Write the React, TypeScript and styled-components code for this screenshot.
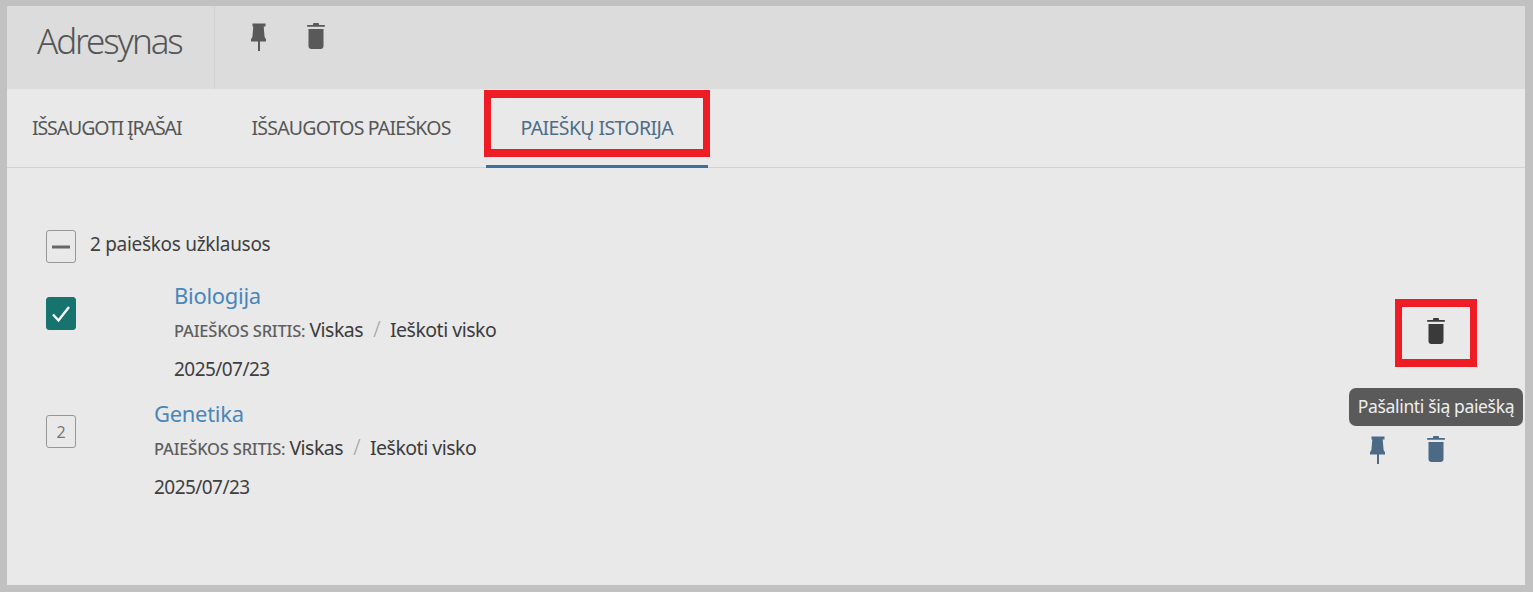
import React from "react";
import styled, { createGlobalStyle } from "styled-components";

const Global = createGlobalStyle`
  html, body { margin: 0; padding: 0; background: #c1c1c1; }
  body { font-family: "Noto Sans", "Liberation Sans", sans-serif; color: #3c3c3c; }
  * { box-sizing: border-box; }
`;

const Frame = styled.div`
  width: 1533px;
  height: 592px;
  padding: 6px 8px 7px 7px;
  background: #c1c1c1;
  overflow: hidden;
`;
const Panel = styled.div`
  height: 579px;
  background: #e9e9e9;
  display: flex;
  flex-direction: column;
`;
const Header = styled.header`
  height: 83px;
  flex: none;
  background: #dcdcdc;
  display: flex;
`;
const TitleBlock = styled.div`
  width: 208px;
  padding: 14px 0 0 30px;
  border-right: 1px solid #d1d1d1;
`;
const Title = styled.h1`
  margin: 0;
  font-size: 35px;
  line-height: 42px;
  font-weight: 300;
  letter-spacing: -2.1px;
  color: #555;
`;
const HeaderTools = styled.div`
  display: flex;
  gap: 40px;
  padding: 17px 0 0 36px;
  color: #595959;
`;
const IconButton = styled.span<{ $tone?: string }>`
  position: relative;
  display: block;
  height: 28px;
  line-height: 0;
  color: ${(p) => p.$tone || "inherit"};
`;
const TabRow = styled.nav`
  height: 79px;
  flex: none;
  display: flex;
  border-bottom: 1px solid #d2d2d2;
`;
const Tab = styled.div<{ $active?: boolean; $track: number }>`
  position: relative;
  padding: 0 35px;
  height: 79px;
  line-height: 77px;
  font-size: 19.5px;
  letter-spacing: ${(p) => p.$track}px;
  white-space: nowrap;
  color: ${(p) => (p.$active ? "#4f6c87" : "#565656")};
  border-bottom: 3px solid ${(p) => (p.$active ? "#3b709f" : "transparent")};
  &:first-child {
    padding-left: 25px;
  }
`;
const RedBox = styled.span<{ $inset: string }>`
  position: absolute;
  inset: ${(p) => p.$inset};
  border: solid #ee1c25;
  border-width: 8px 7px;
  pointer-events: none;
`;
const Content = styled.main`
  padding: 62px 80px 0 39px;
  display: flex;
  flex-direction: column;
`;
const SelectAll = styled.div`
  display: flex;
  align-items: center;
  gap: 14px;
  height: 33px;
  margin-bottom: 17px;
  font-size: 19px;
  line-height: 29px;
  letter-spacing: -0.3px;
  color: #3f3f3f;
`;
const SelectLabel = styled.span`
  padding-bottom: 4px;
`;
const Box = styled.span<{ $checked?: boolean }>`
  flex: none;
  width: 30px;
  height: 33px;
  display: flex;
  align-items: center;
  justify-content: center;
  border-radius: 3px;
  border: 1.5px solid ${(p) => (p.$checked ? "#17736e" : "#969696")};
  background: ${(p) => (p.$checked ? "#17736e" : "transparent")};
  color: #777;
  font-size: 16px;
`;
const Row = styled.section`
  height: 118px;
  display: flex;
`;
const RowBox = styled.div`
  padding-top: 17px;
`;
const RowBody = styled.div<{ $indent: number }>`
  flex: 1;
  padding-left: ${(p) => p.$indent}px;
`;
const ResultTitle = styled.a`
  display: block;
  font-size: 22px;
  line-height: 30px;
  letter-spacing: -0.3px;
  color: #4a86ba;
`;
const Meta = styled.div`
  margin-top: 3px;
  line-height: 32px;
  font-size: 19.5px;
  letter-spacing: -0.5px;
  color: #3c3c3c;
  display: flex;
  align-items: baseline;
`;
const MetaLabel = styled.span`
  font-size: 16.5px;
  letter-spacing: -0.2px;
  font-weight: 500;
  color: #5f5f5f;
  margin-right: 4px;
`;
const Slash = styled.span`
  color: #a3a3a3;
  font-weight: 300;
  margin: 0 10px;
  font-size: 21px;
`;
const DateLine = styled.div`
  margin-top: 6px;
  line-height: 32px;
  font-size: 19px;
  letter-spacing: -0.55px;
  color: #3f3f3f;
`;
const Actions = styled.div`
  display: flex;
  align-items: flex-start;
  gap: 41px;
  padding-top: 38px;
`;
const Tooltip = styled.span`
  position: absolute;
  top: 70px;
  right: -78px;
  width: 174px;
  height: 38px;
  border-radius: 7px;
  background: #5a5a5a;
  color: #eeeeee;
  font-size: 17.5px;
  line-height: 37px;
  letter-spacing: -0.35px;
  text-align: center;
  white-space: nowrap;
`;

const PinIcon = ({ hidden }: { hidden?: boolean }) => (
  <svg width="16" height="28" viewBox="0 0 16 28" fill="currentColor" style={hidden ? { visibility: "hidden" } : undefined}>
    <path d="M1.5 0.5h13v3h-1.8l0.9 10.5 1.4 2.2v2.3H0v-2.3l1.4-2.2 0.9-10.5H1.5z" />
    <rect x="7" y="18" width="2" height="10" />
  </svg>
);

const TrashIcon = () => (
  <svg width="18" height="26" viewBox="0 0 18 26" fill="currentColor">
    <path d="M6 1.2C6 .5 6.5 0 7.2 0h3.6c.7 0 1.2.5 1.2 1.2V2h5.2c.5 0 .8.4.8.9s-.3.9-.8.9H.8C.3 3.800 0 3.400 0 2.900S.3 2 .8 2H6z" />
    <path d="M1.500 6h15v17.200c0 1.600-1.200 2.800-2.800 2.800H4.300c-1.600 0-2.800-1.200-2.800-2.800z" />
  </svg>
);

const rows = [
  { id: 1, title: "Biologija", indent: 98 },
  { id: 2, title: "Genetika", indent: 78 },
];

export default function App() {
  return (
    <Frame>
      <Global />
      <Panel>
        <Header>
          <TitleBlock>
            <Title>Adresynas</Title>
          </TitleBlock>
          <HeaderTools>
            <IconButton>
              <PinIcon />
            </IconButton>
            <IconButton>
              <TrashIcon />
            </IconButton>
          </HeaderTools>
        </Header>
        <TabRow>
          <Tab $track={-1.1}>IŠSAUGOTI ĮRAŠAI</Tab>
          <Tab $track={-0.79}>IŠSAUGOTOS PAIEŠKOS</Tab>
          <Tab $active $track={-0.62}>
            PAIEŠKŲ ISTORIJA
            <RedBox $inset="1px -2px 8px -2px" />
          </Tab>
        </TabRow>
        <Content>
          <SelectAll>
            <Box>
              <svg width="18" height="4" viewBox="0 0 18 4">
                <rect y="0.500" width="18" height="3" fill="#666" />
              </svg>
            </Box>
            <SelectLabel>2 paieškos užklausos</SelectLabel>
          </SelectAll>
          {rows.map((row) => (
            <Row key={row.id}>
              <RowBox>
                {row.id === 1 ? (
                  <Box $checked>
                    <svg width="20" height="18" viewBox="0 0 20 18" fill="none" stroke="#fff" strokeWidth="2.400">
                      <path d="M2 9.500l5.500 6L18 2" />
                    </svg>
                  </Box>
                ) : (
                  <Box>{row.id}</Box>
                )}
              </RowBox>
              <RowBody $indent={row.indent}>
                <ResultTitle>{row.title}</ResultTitle>
                <Meta>
                  <MetaLabel>PAIEŠKOS SRITIS:</MetaLabel>
                  Viskas
                  <Slash>/</Slash>
                  Ieškoti visko
                </Meta>
                <DateLine>2025/07/23</DateLine>
              </RowBody>
              <Actions>
                <IconButton $tone="#4c6a86">
                  <PinIcon hidden={row.id === 1} />
                </IconButton>
                <IconButton $tone={row.id === 1 ? "#3a3a3a" : "#4c6a86"}>
                  <TrashIcon />
                  {row.id === 1 && (
                    <>
                      <RedBox $inset="-19px -32px -21px -32px" />
                      <Tooltip>Pašalinti šią paiešką</Tooltip>
                    </>
                  )}
                </IconButton>
              </Actions>
            </Row>
          ))}
        </Content>
      </Panel>
    </Frame>
  );
}
